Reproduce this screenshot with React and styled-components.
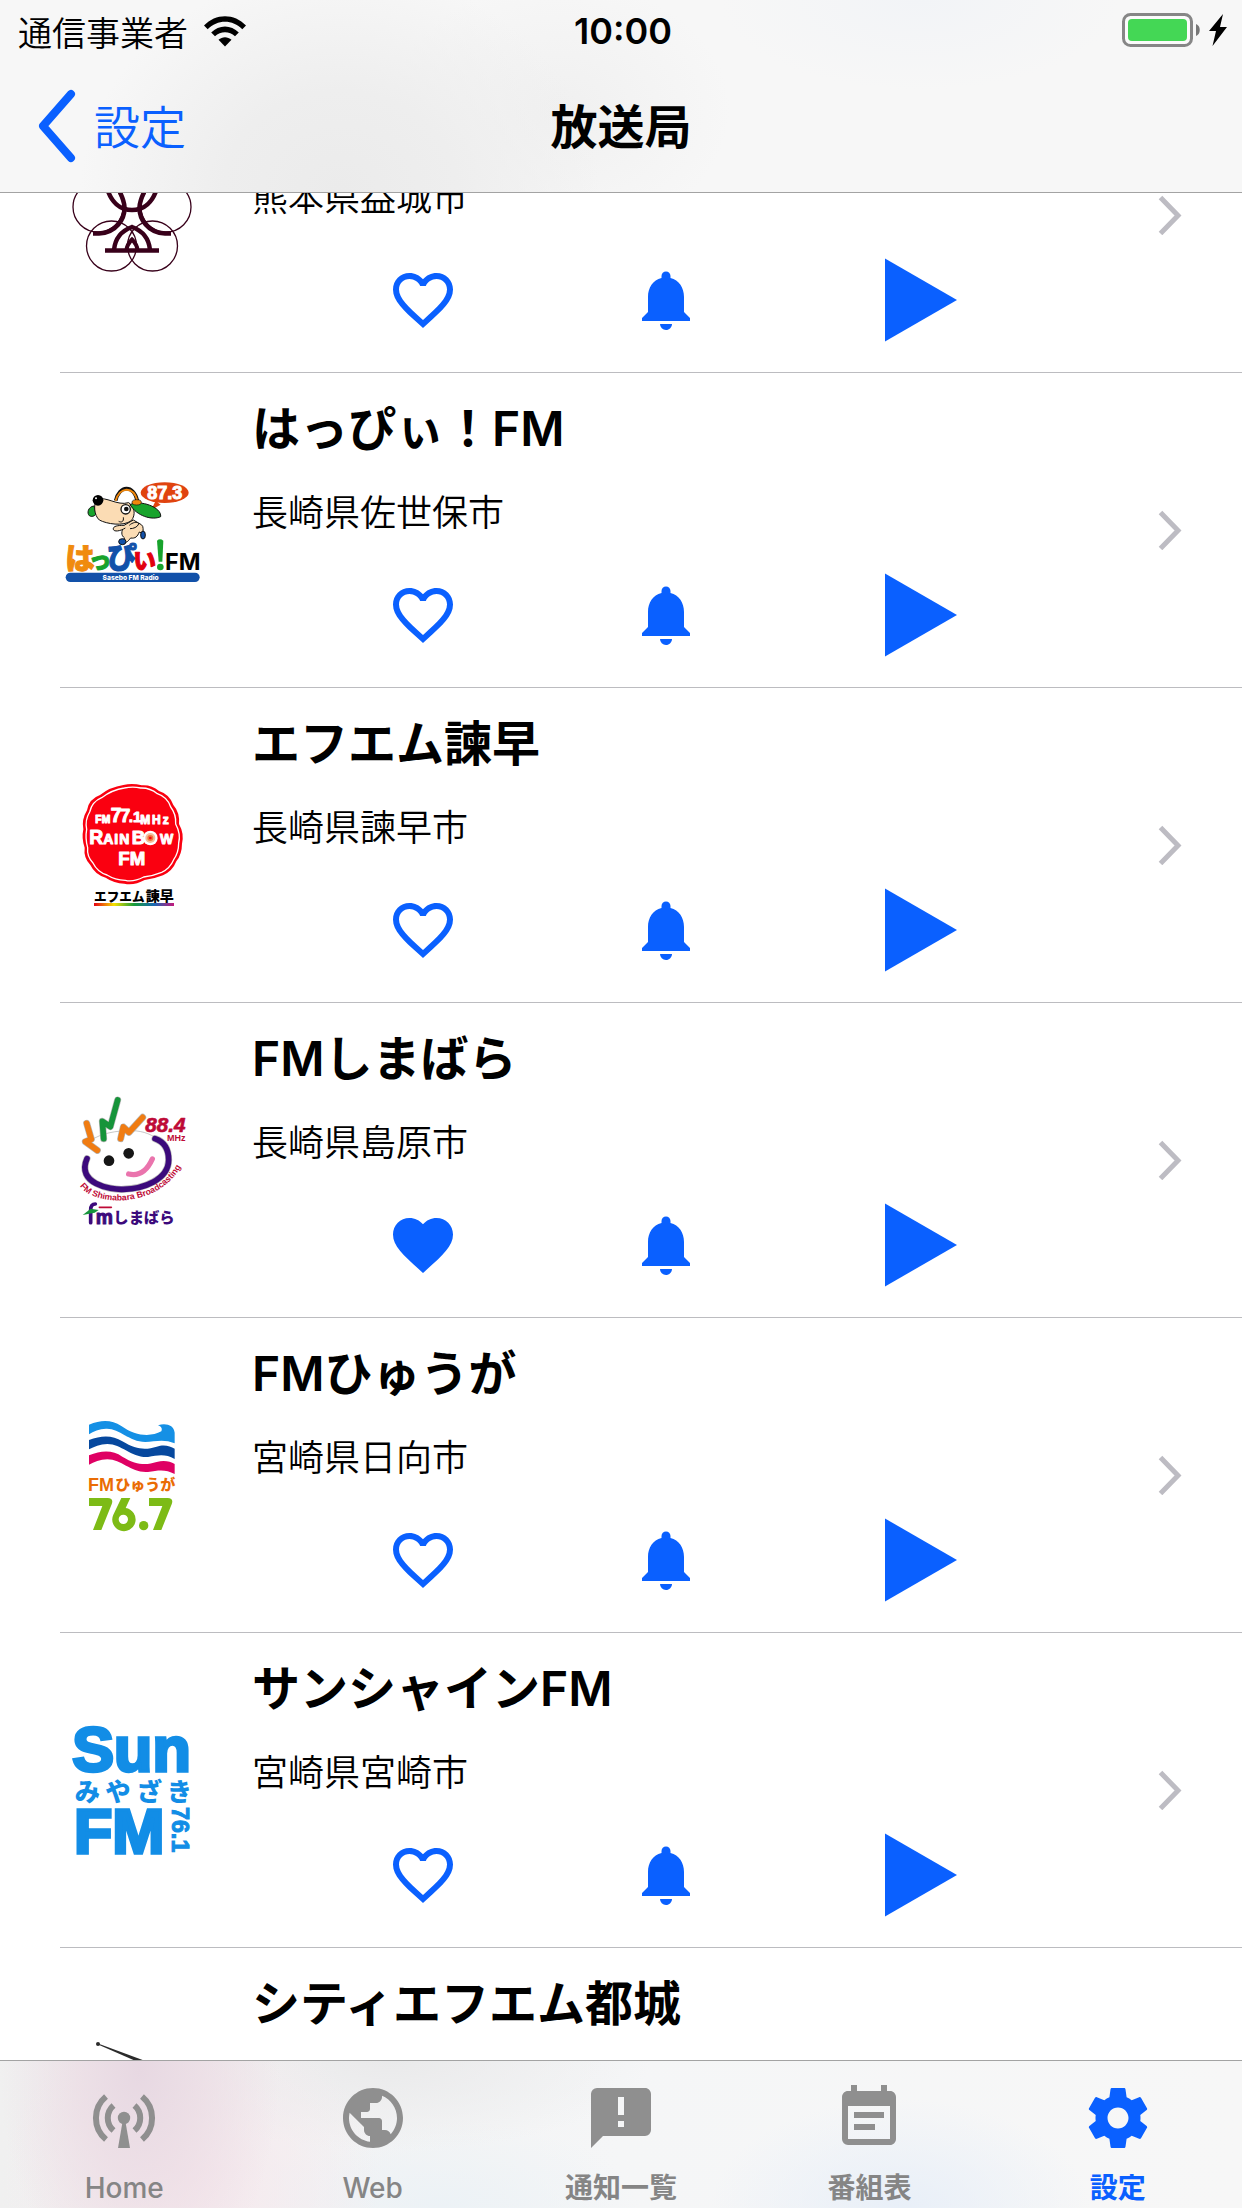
import React, { useLayoutEffect, useRef, useState } from "react";
import styled, { createGlobalStyle } from "styled-components";
import { MdFavorite, MdFavoriteBorder, MdNotifications, MdPublic, MdEventNote } from "react-icons/md";

const BLUE = "#0a60ff";
const GRAY = "#8f8f8f";
const LABEL_GRAY = "#858585";

const GlobalStyle = createGlobalStyle`
  * { box-sizing: border-box; }
  body {
    margin: 0;
    background: #fff;
    color: #000;
    font-family: Inter, "Noto Sans CJK JP", sans-serif;
  }
`;

const Screen = styled.div`
  display: flex;
  flex-direction: column;
  height: 100vh;
  overflow: hidden;
`;

const Header = styled.header`
  flex: none;
  border-bottom: 1px solid #a3a3a3;
  background:
    radial-gradient(ellipse 260px 220px at 340px 190px, #ebebeb 0%, #eeeeee 45%, #eeeeee00 100%),
    radial-gradient(ellipse 170px 130px at 560px 110px, #f0f0f0 0%, #f0f0f000 100%),
    radial-gradient(ellipse 200px 90px at 920px 0, #f2f4f7 0%, #f2f4f700 100%),
    #f7f7f7;
`;

const StatusBar = styled.div`
  display: grid;
  grid-template-columns: 1fr auto 1fr;
  align-items: center;
  height: 62px;
  padding: 0 14px 0 18px;
`;

const Carrier = styled.div`
  display: flex;
  align-items: center;
  gap: 16px;
  font-size: 34px;
  font-weight: 350;
`;

const Clock = styled.time`
  font-size: 36px;
  font-weight: 600;
`;

const Power = styled.div`
  display: flex;
  justify-content: flex-end;
`;

const NavBar = styled.div`
  display: grid;
  grid-template-columns: 1fr auto 1fr;
  align-items: center;
  height: 130px;
  padding: 0 36px;
`;

const Back = styled.a`
  display: flex;
  align-items: center;
  gap: 18px;
  color: ${BLUE};
  font-size: 46px;
  font-weight: 350;
  line-height: 72px;
  text-decoration: none;
`;

const Title = styled.h1`
  margin: 0;
  font-size: 47px;
  font-weight: 600;
  line-height: 72px;
`;

const Main = styled.main`
  flex: 1;
  min-height: 0;
  overflow-y: auto;
  scrollbar-width: none;
`;

const List = styled.ul`
  margin: 0;
  padding: 0 0 0 60px;
  list-style: none;
`;

const Row = styled.li`
  display: flex;
  align-items: center;
  min-height: 315px;
  padding-right: 60px;
  border-bottom: 1px solid #bcbcc0;
`;

const Logo = styled.svg`
  flex: none;
  width: 144px;
  height: 144px;
  margin-right: 48px;
`;

const Body = styled.div`
  flex: 1;
  display: grid;
  grid-template-rows: 74px 48px 106px;
  row-gap: 24px;
`;

const Name = styled.h2`
  grid-row: 1;
  margin: 0;
  font-size: 48px;
  font-weight: 600;
  line-height: 74px;
`;

const Place = styled.p`
  grid-row: 2;
  margin: 0;
  font-size: 36px;
  font-weight: 350;
  line-height: 46px;
`;

const Actions = styled.div`
  grid-row: 3;
  display: grid;
  grid-template-columns: repeat(3, 1fr);
  padding: 0 128px 0 49px;
`;

const Action = styled.button`
  display: flex;
  align-items: center;
  justify-content: center;
  padding: 0;
  border: 0;
  background: none;
  color: ${BLUE};
`;

const TabBar = styled.nav`
  flex: none;
  display: grid;
  grid-template-columns: repeat(5, 1fr);
  height: 148px;
  border-top: 1px solid #a3a3a3;
  background:
    radial-gradient(ellipse 140px 230px at 140px 10px, #e7d8e2 0%, #ebdce4c0 45%, #f1e3e900 100%),
    radial-gradient(ellipse 190px 170px at 190px 120px, #f6e8ed 0%, #f6e8ed00 100%),
    radial-gradient(ellipse 260px 90px at 390px 0, #eaeaeb 0%, #ebebeb00 100%),
    radial-gradient(ellipse 200px 90px at 440px 148px, #ecf2f6 0%, #ecf2f600 100%),
    radial-gradient(ellipse 190px 110px at 900px 148px, #e8eff8 0%, #e8eff800 100%),
    linear-gradient(90deg, #f0f0f0, #f5f6f7 50%, #f7f7f7);
`;

const Tab = styled.a`
  display: flex;
  flex-direction: column;
  align-items: center;
  gap: 16px;
  padding-top: 21px;
  color: ${({ $active }) => ($active ? BLUE : GRAY)};
  text-decoration: none;
`;

const TabLabel = styled.span`
  color: ${({ $active }) => ($active ? BLUE : LABEL_GRAY)};
  font-size: 28px;
  font-weight: ${({ $strong }) => ($strong ? 600 : 500)};
  line-height: 36px;
`;

const WifiIcon = () => (
  <svg width="42" height="31" viewBox="0 0 42 31" aria-hidden="true">
    <path d="M0 9.5C11.500 -3 30.500 -3 42 9.500L38.300 13.200C28.800 3.200 13.200 3.200 3.700 13.200Z" />
    <path d="M7.200 16.500C15 8.500 27 8.500 34.800 16.500L31 20.300C25.500 14.800 16.500 14.800 11 20.300Z" />
    <path d="M14.500 23.800C18.300 20.300 23.700 20.300 27.500 23.800L21 30.500Z" />
  </svg>
);

const BatteryIcon = () => (
  <svg width="106" height="36" viewBox="0 0 106 36" aria-hidden="true">
    <rect x="1.500" y="1.500" width="68" height="31" rx="7" fill="#fbfbfb" stroke="#868686" strokeWidth="3" />
    <rect x="6" y="6" width="59" height="22" rx="4" fill="#44d755" />
    <path d="M74 11C79 12.500 79 21.500 74 23Z" fill="#777" />
    <path d="M101 1L87 18H94L90.500 33L105 14H98Z" />
  </svg>
);

const BackIcon = () => (
  <svg width="40" height="76" viewBox="0 0 40 76" fill="none" aria-hidden="true">
    <path d="M35 5L7 37L35 69" stroke={BLUE} strokeWidth="8" strokeLinecap="round" strokeLinejoin="round" />
  </svg>
);

const ChevronIcon = () => (
  <svg width="24" height="40" viewBox="0 0 24 40" fill="none" aria-hidden="true">
    <path d="M2.500 2.500L20 20.500L2.500 38.500" stroke="#bdbcc3" strokeWidth="5" />
  </svg>
);

const PlayIcon = () => (
  <svg width="96" height="96" viewBox="0 0 96 96" fill="currentColor" aria-hidden="true">
    <path d="M24 6.500L96 48L24 89.500Z" />
  </svg>
);

const AntennaIcon = () => (
  <svg width="72" height="72" viewBox="-36 -36 72 72" fill="none" aria-hidden="true">
    <circle r="6.200" fill="currentColor" />
    <path d="M-1.500 4H1.500L6 30H-6Z" fill="currentColor" />
    <g stroke="currentColor" strokeWidth="6">
      <path d="M-10.500 -12.500A16.500 16.500 0 0 0 -10.500 12.500M10.500 -12.500A16.500 16.500 0 0 1 10.500 12.500" />
      <path d="M-18 -21.500A28 28 0 0 0 -18 21.500M18 -21.500A28 28 0 0 1 18 21.500" />
    </g>
  </svg>
);

const MessageIcon = () => (
  <svg width="72" height="72" viewBox="0 0 24 24" fill="currentColor" aria-hidden="true">
    <path d="M13,11H11V5H13M13,15H11V13H13M20,2H4A2,2 0 0,0 2,4V22L6,18H20A2,2 0 0,0 22,16V4C22,2.89 21.1,2 20,2Z" />
  </svg>
);

const GearIcon = () => (
  <svg width="72" height="72" viewBox="0 0 24 24" fill="currentColor" aria-hidden="true">
    <path d="M19.43 12.98c.04-.32.07-.64.07-.98s-.03-.66-.07-.98l2.110-1.650c.190-.150.240-.420.120-.640l-2-3.460c-.120-.220-.390-.300-.610-.220l-2.490 1c-.520-.400-1.080-.730-1.690-.980l-.380-2.650C14.460 2.180 14.250 2 14 2h-4c-.250 0-.460.180-.490.420l-.380 2.650c-.610.250-1.170.590-1.690.980l-2.490-1c-.230-.090-.490 0-.610.220l-2 3.460c-.130.220-.070.490.120.640l2.110 1.650c-.040.320-.070.650-.070.980s.030.660.070.980l-2.110 1.650c-.190.150-.240.420-.120.640l2 3.460c.120.220.390.300.610.220l2.490-1c.520.400 1.080.730 1.690.980l.380 2.650c.030.240.240.420.490.420h4c.250 0 .460-.180.490-.420l.380-2.650c.610-.250 1.170-.590 1.690-.980l2.490 1c.230.090.490 0 .610-.220l2-3.460c.120-.220.070-.490-.120-.640l-2.110-1.650zM12 15.500c-1.930 0-3.500-1.570-3.500-3.500s1.570-3.500 3.500-3.500 3.500 1.570 3.500 3.500-1.570 3.500-3.500 3.500z" />
  </svg>
);

const ARIAL = '"Liberation Sans", sans-serif';

const MashikiLogo = () => (
  <Logo viewBox="60 143 144 144" fill="none" stroke="#38001a" aria-hidden="true">
    <g strokeWidth="1.300">
      <circle cx="98" cy="207" r="25" />
      <circle cx="166" cy="207" r="25" />
      <circle cx="111.500" cy="246" r="25" />
      <circle cx="152.500" cy="246" r="25" />
    </g>
    <g strokeWidth="4.500">
      <path d="M107 188C111 202 120 210 132 210C144 210 153 202 157 188" />
      <path d="M93 233.500H99C116 233 125 219 124.500 207C124 199 121 195 118 188M171 233.500H165C148 233 139 219 139.500 207C140 199 143 195 146 188" />
      <path d="M114 250C115 239 121 231 132 227C143 231 149 239 150 250" />
      <path d="M105 250.500H159" />
    </g>
    <path d="M126.500 250C127 245 129.500 242 132 239.500C134.500 242 137 245 137.500 250" strokeWidth="4" />
  </Logo>
);

const HappyLogo = () => (
  <Logo viewBox="30 -6 432 432" aria-hidden="true">
    <ellipse cx="344" cy="98" rx="72" ry="31" fill="#e0430f" />
    <path d="M318 120L304 149L332 134L324 128Z" fill="#e0430f" />
    <text x="344" y="117" textAnchor="middle" fontFamily={ARIAL} fontSize="54" fontWeight="700" fill="#fff" stroke="#fff" strokeWidth="3">87.3</text>
    <path d="M132 138C114 140 110 160 118 167C126 172 134 168 138 162Z" fill="#18a32c" stroke="#111" strokeWidth="3" />
    <path d="M222 196C214 215 212 226 224 234L214 246C232 252 236 240 242 234C256 236 262 230 268 216L280 222C278 208 282 200 274 194L250 180Z" fill="#fbdcb4" stroke="#111" strokeWidth="3" />
    <path d="M140 118C170 108 200 138 236 128C254 140 258 164 244 182C220 200 170 192 148 180C132 166 130 134 140 118Z" fill="#fbdcb4" stroke="#111" strokeWidth="3" />
    <path d="M226 204C210 214 192 216 190 208C188 198 204 196 222 196M238 196C248 186 266 184 266 192C262 202 250 206 240 206" fill="#fbdcb4" stroke="#111" strokeWidth="3" />
    <path d="M197 122C208 76 250 72 262 122" fill="none" stroke="#111" strokeWidth="11" />
    <path d="M197 122C208 80 250 76 262 122" fill="none" stroke="#ef870c" strokeWidth="6" />
    <path d="M240 134C270 118 336 142 332 170C306 182 260 168 240 134Z" fill="#18a32c" stroke="#111" strokeWidth="3" />
    <ellipse cx="260" cy="127" rx="14" ry="8" fill="#ef870c" stroke="#111" strokeWidth="2" />
    <circle cx="144" cy="121" r="16" fill="#000" />
    <circle cx="138" cy="115" r="3" fill="#fff" />
    <circle cx="227" cy="148" r="14" fill="#fff" stroke="#111" strokeWidth="4" />
    <circle cx="229" cy="147" r="7" fill="#111" />
    <path d="M220 172C222 186 214 188 206 184" fill="none" stroke="#111" strokeWidth="3" />
    <ellipse cx="217" cy="245" rx="11" ry="9" fill="#1251a9" stroke="#111" strokeWidth="3" />
    <ellipse cx="279" cy="225" rx="7" ry="12" fill="#1251a9" stroke="#111" strokeWidth="3" />
    <g fontSize="88" fontWeight="900" strokeWidth="3" strokeLinejoin="round">
      <text x="46" y="326" fill="#f08b0e" stroke="#f08b0e">は</text>
      <text x="116" y="324" fontSize="68" fill="#18a32c" stroke="#18a32c">っ</text>
      <text x="172" y="324" fill="#1251a9" stroke="#1251a9">ぴ</text>
      <text x="250" y="327" fontSize="68" fill="#e2000f" stroke="#e2000f">い</text>
    </g>
    <path d="M321 242Q330 234 340 242L337 305H326Z" fill="#18a32c" />
    <circle cx="331" cy="321" r="10" fill="#18a32c" />
    <text x="345" y="330" fontSize="70" fontWeight="700" fill="#000">FM</text>
    <rect x="47" y="338" width="402" height="28" rx="14" fill="#1251a9" />
    <text x="242" y="359" textAnchor="middle" fontSize="20" fontWeight="800" fill="#fff">Sasebo FM Radio</text>
  </Logo>
);

const IsahayaLogo = () => (
  <Logo viewBox="0 9 432 432" aria-hidden="true">
    <defs>
      <linearGradient id="rainbow">
        <stop offset="0" stopColor="#e60012" />
        <stop offset="0.250" stopColor="#f5e100" />
        <stop offset="0.500" stopColor="#179b3a" />
        <stop offset="0.750" stopColor="#1768b4" />
        <stop offset="1" stopColor="#c4187c" />
      </linearGradient>
    </defs>
    <path d="M190 45Q217 38 245 46Q275 44 297 63Q329 73 340 105Q360 128 357 162Q373 190 366 221Q366 252 349 274Q338 303 309 316Q282 327 254 330Q223 347 193 341Q162 340 137 323Q105 314 91 285Q70 263 74 233Q64 205 70 178Q64 149 81 121Q86 87 120 75Q150 51 190 45Z" fill="#fa0010" />
    <path d="M193 54Q219 49 242 54Q270 53 292 71Q322 81 332 111Q349 133 347 162Q363 192 356 219Q356 248 341 269Q330 295 305 307Q278 318 251 321Q220 337 196 331Q165 330 141 315Q112 306 99 279Q80 259 83 233Q75 205 80 178Q74 151 89 126Q96 95 125 83Q157 59 193 54Z" fill="none" stroke="#fff" strokeWidth="4" />
    <g fill="#fff" stroke="#fff" strokeWidth="3" strokeLinejoin="round" fontFamily={ARIAL} fontWeight="700">
      <text x="106" y="158" fontSize="31">FM</text>
      <text x="152" y="155" fontSize="58">7</text>
      <text x="181" y="155" fontSize="54">7</text>
      <text x="206" y="155" fontSize="46">.1</text>
      <text x="241" y="161" fontSize="36">M</text>
      <text x="276" y="161" fontSize="36">H</text>
      <text x="308" y="161" fontSize="36">z</text>
      <text x="88" y="221" fontSize="58">R</text>
      <text x="130" y="221" fontSize="42">A</text>
      <text x="163" y="221" fontSize="42">I</text>
      <text x="178" y="221" fontSize="42">N</text>
      <text x="215" y="221" fontSize="56">B</text>
      <text x="300" y="221" fontSize="42">W</text>
      <text x="175" y="284" fontSize="56">FM</text>
    </g>
    <circle cx="271" cy="204" r="22" fill="#fff" />
    <circle cx="271" cy="204" r="15" fill="#f5bd9b" />
    <circle cx="271" cy="204" r="9" fill="#f0763d" />
    <circle cx="271" cy="204" r="4" fill="#fa0010" />
    <text x="102" y="393" fontSize="38" fontWeight="900" fill="#000">エフエム</text>
    <text x="257" y="393" fontSize="42" fontWeight="900" fill="#000">諫早</text>
    <rect x="102" y="399" width="240" height="9" fill="url(#rainbow)" />
  </Logo>
);

const ShimabaraLogo = () => (
  <Logo viewBox="0 24 432 432" fill="none" strokeLinecap="round" strokeLinejoin="round" aria-hidden="true">
    <defs>
      <path id="smile" d="M60 318C100 380 300 390 368 250" />
    </defs>
    <g stroke="#b8b8b8" strokeWidth="21">
      <path d="M80 130L94 178L76 185L112 211M131 176L127 124L151 140L173 60M182 176L190 141L207 157L248 112" />
      <path d="M81 236C48 310 150 330 190 328C250 326 325 300 326 240C326 208 314 186 285 176" />
    </g>
    <path d="M80 190C110 165 150 154 200 152C240 150 270 160 290 176" stroke="#aaa" strokeWidth="2" />
    <g strokeWidth="17">
      <path d="M80 130L94 178L76 185L112 211M182 176L190 141L207 157L248 112" stroke="#f07c12" />
      <path d="M131 176L127 124L151 140L173 60" stroke="#16943a" />
      <path d="M81 236C48 310 150 330 190 328C250 326 325 300 326 240C326 208 314 186 285 176" stroke="#3c0a7c" />
      <path d="M206 282C240 290 262 270 277 237" stroke="#ea74ad" strokeWidth="16" />
    </g>
    <circle cx="147" cy="242" r="16" fill="#161616" />
    <circle cx="206" cy="220" r="16" fill="#161616" />
    <text x="256" y="156" fontFamily={ARIAL} fontSize="62" fontWeight="700" fontStyle="italic" fill="#be0a37" stroke="#be0a37" strokeWidth="2">88.4</text>
    <text x="321" y="184" fontFamily={ARIAL} fontSize="27" fontWeight="700" fill="#be0a37">MHz</text>
    <text fontFamily={ARIAL} fontSize="26" fontWeight="700" fill="#be0a37">
      <textPath href="#smile">FM Shimabara Broadcasting</textPath>
    </text>
    <path d="M92 428V390Q92 372 106 372" stroke="#3c0a7c" strokeWidth="11" />
    <path d="M68 405L92 386L116 390L104 398Z" fill="#16943a" />
    <path d="M118 382H154" stroke="#be0a37" strokeWidth="5" />
    <text x="107" y="431" fontFamily={ARIAL} fontSize="58" fontWeight="700" fill="#3c0a7c" stroke="#3c0a7c" strokeWidth="3">m</text>
    <text x="160" y="428" fontSize="46" fontWeight="900" fill="#3c0a7c">しまばら</text>
  </Logo>
);

const HyugaLogo = () => (
  <Logo viewBox="0 9 432 432" aria-hidden="true">
    <path d="M87 74C125 58 155 59 184 78C225 108 272 112 304 94C308 86 304 80 294 76C318 68 342 76 344 98V130C314 116 285 124 256 126C205 124 178 84 138 86C118 87 100 93 87 103Z" fill="#1590e5" />
    <path d="M87 120C125 105 158 105 187 124C230 150 258 150 290 140C312 132 330 138 344 146V177C318 162 298 164 264 171C214 174 186 132 142 132C120 133 102 140 87 148Z" fill="#06489e" />
    <path d="M87 166C125 151 158 150 187 170C230 196 258 196 290 186C312 180 330 184 344 192V222C318 208 298 210 264 216C214 220 186 178 142 178C120 179 102 186 87 194Z" fill="#df0063" />
    <g fill="#ea6c04">
      <text x="84" y="272" fontFamily={ARIAL} fontSize="54" fontWeight="700">FM</text>
      <text x="166" y="271" fontSize="45" fontWeight="800">ひゅうが</text>
    </g>
    <g fill="#7dbb16">
      <path d="M87 294H143Q162 295 155 313L124 390H99L127 318H87Z" />
      <path fillRule="evenodd" d="M184 294H211L197 324A35 35 0 1 1 160 344ZM190 344A14 14 0 1 0 190 372A14 14 0 1 0 190 344Z" />
      <circle cx="251" cy="377" r="14" />
      <path d="M267 294H323Q342 295 335 313L304 390H279L307 318H267Z" />
    </g>
  </Logo>
);

const SunshineLogo = () => (
  <Logo viewBox="0 24 432 432" fill="#128de6" aria-hidden="true">
    <g stroke="#128de6" strokeWidth="10" fontFamily={ARIAL} fontSize="188" fontWeight="700">
      <text x="37" y="184">Sun</text>
      <text x="42" y="429">FM</text>
    </g>
    <g fontSize="76" fontWeight="900">
      <text x="44" y="272">み</text>
      <text x="136" y="272">や</text>
      <text x="230" y="272">ざ</text>
      <text x="320" y="272">き</text>
    </g>
    <text transform="translate(337 291) rotate(90)" fontFamily={ARIAL} fontSize="70" fontWeight="700" stroke="#128de6" strokeWidth="3">76.1</text>
  </Logo>
);

const CityLogo = () => (
  <Logo viewBox="0 0 144 144" fill="#2b2b2b" aria-hidden="true">
    <circle cx="38" cy="11" r="2" />
    <path d="M38 10.500L84 27.500L78 29L38 11.500Z" />
  </Logo>
);

const stations = [
  { id: "mashiki", place: "熊本県益城市", Art: MashikiLogo },
  { id: "happy", name: "はっぴぃ！FM", place: "長崎県佐世保市", Art: HappyLogo },
  { id: "isahaya", name: "エフエム諫早", place: "長崎県諫早市", Art: IsahayaLogo },
  { id: "shimabara", name: "FMしまばら", place: "長崎県島原市", Art: ShimabaraLogo, liked: true },
  { id: "hyuga", name: "FMひゅうが", place: "宮崎県日向市", Art: HyugaLogo },
  { id: "sunshine", name: "サンシャインFM", place: "宮崎県宮崎市", Art: SunshineLogo },
  { id: "city", name: "シティエフエム都城", Art: CityLogo },
];

const tabs = [
  { label: "Home", icon: <AntennaIcon /> },
  { label: "Web", icon: <MdPublic size={72} /> },
  { label: "通知一覧", strong: true, icon: <MessageIcon /> },
  { label: "番組表", strong: true, icon: <MdEventNote size={72} /> },
  { label: "設定", strong: true, icon: <GearIcon />, active: true },
];

function Station({ name, place, Art, liked: initial = false }) {
  const [liked, setLiked] = useState(initial);
  const Heart = liked ? MdFavorite : MdFavoriteBorder;
  return (
    <Row>
      <Art />
      <Body>
        {name && <Name>{name}</Name>}
        {place && <Place>{place}</Place>}
        <Actions>
          <Action type="button" aria-label="お気に入り" aria-pressed={liked} onClick={() => setLiked(!liked)}>
            <Heart size={72} />
          </Action>
          <Action type="button" aria-label="通知">
            <MdNotifications size={72} />
          </Action>
          <Action type="button" aria-label="再生">
            <PlayIcon />
          </Action>
        </Actions>
      </Body>
      <ChevronIcon />
    </Row>
  );
}

export default function App() {
  const list = useRef(null);

  // The list opens part of the way through the first station.
  useLayoutEffect(() => {
    list.current.scrollTop = 135;
  }, []);

  return (
    <Screen>
      <GlobalStyle />
      <Header>
        <StatusBar>
          <Carrier>
            通信事業者
            <WifiIcon />
          </Carrier>
          <Clock>10:00</Clock>
          <Power>
            <BatteryIcon />
          </Power>
        </StatusBar>
        <NavBar>
          <Back href="#settings">
            <BackIcon />
            設定
          </Back>
          <Title>放送局</Title>
        </NavBar>
      </Header>
      <Main ref={list}>
        <List>
          {stations.map((station) => (
            <Station key={station.id} {...station} />
          ))}
        </List>
      </Main>
      <TabBar>
        {tabs.map(({ label, icon, active, strong }) => (
          <Tab key={label} href="#tab" $active={active} aria-current={active ? "page" : undefined}>
            {icon}
            <TabLabel $active={active} $strong={strong}>{label}</TabLabel>
          </Tab>
        ))}
      </TabBar>
    </Screen>
  );
}
